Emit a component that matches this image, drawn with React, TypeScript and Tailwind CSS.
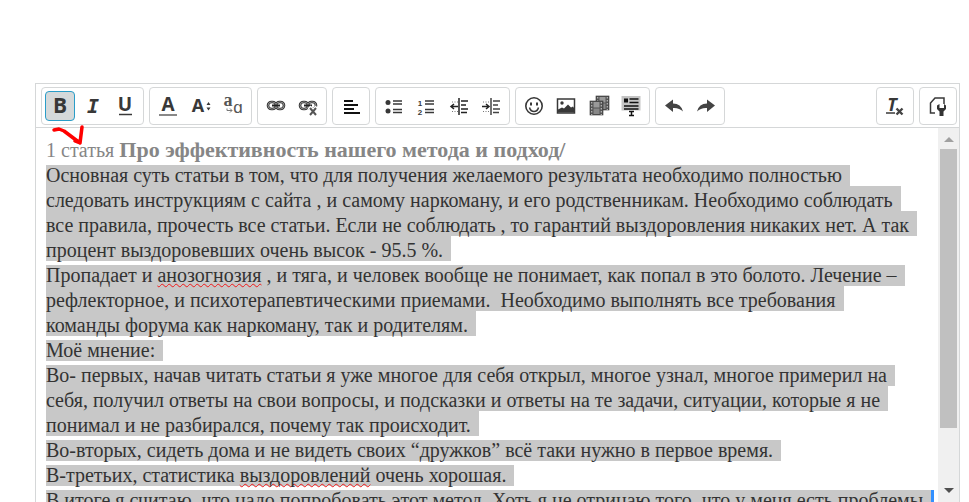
import type { ReactNode } from 'react';

const ink = '#383838';

function Group({ width, children }: { width: string; children: ReactNode }) {
  return (
    <div className={`flex h-[38px] shrink-0 items-center justify-between rounded border border-[#d5d7d8] px-[3px] ${width}`}>
      {children}
    </div>
  );
}

function Tool({ label, active = false, children }: { label: string; active?: boolean; children: ReactNode }) {
  return (
    <button
      type="button"
      aria-label={label}
      aria-pressed={active}
      className={`flex h-[30px] w-[30px] shrink-0 items-center justify-center rounded border ${
        active ? 'border-[#2a9dc8] bg-[#d5d9da]' : 'border-transparent'
      }`}
    >
      <svg width="30" height="30" viewBox="-3 -3 30 30" className="shrink-0" fill="none" stroke={ink} strokeWidth="2" aria-hidden="true">
        {children}
      </svg>
    </button>
  );
}

function Glyph({ x, y, size, family = 'Open Sans', weight = 700, italic = false, fill = ink, children }: {
  x: number; y: number; size: number; family?: string; weight?: number; italic?: boolean; fill?: string; children: string;
}) {
  return (
    <text x={x} y={y} fontSize={size} fontFamily={`"${family}", sans-serif`} fontWeight={weight}
      fontStyle={italic ? 'italic' : 'normal'} textAnchor="middle" fill={fill} stroke="none">
      {children}
    </text>
  );
}

function Chain() {
  return (
    <>
      <rect x="4" y="8" width="8" height="7" rx="3.5" stroke="#333" strokeWidth="2.6" />
      <rect x="12" y="8" width="8" height="7" rx="3.5" stroke="#333" strokeWidth="2.6" />
      <rect x="4" y="8" width="8" height="7" rx="3.5" stroke="#aaa" strokeWidth=".8" />
      <rect x="12" y="8" width="8" height="7" rx="3.5" stroke="#aaa" strokeWidth=".8" />
      <path d="M8 11.5h8" stroke="#222" strokeWidth="2" />
    </>
  );
}

function Film({ x, y }: { x: number; y: number }) {
  return (
    <g transform={`translate(${x} ${y})`}>
      <rect width="13" height="14" fill="#555" stroke="#333" strokeWidth=".6" />
      <rect x="3.5" y="1" width="6" height="5.5" fill="#999" stroke="none" />
      <rect x="3.5" y="7.5" width="6" height="5.5" fill="#888" stroke="none" />
      <path d="M1.7 1v13M11.3 1v13" stroke="#bbb" strokeWidth="1.2" strokeDasharray="1.5 1.5" />
    </g>
  );
}

function Misspelt({ children }: { children: string }) {
  return (
    <span className="underline decoration-[#f01818] decoration-wavy decoration-1 underline-offset-1 [text-decoration-skip-ink:none]">
      {children}
    </span>
  );
}

const paragraphs: ReactNode[][] = [
  [
    'Основная суть статьи в том, что для получения желаемого результата необходимо полностью',
    'следовать инструкциям с сайта , и самому наркоману, и его родственникам. Необходимо соблюдать',
    'все правила, прочесть все статьи. Если не соблюдать , то гарантий выздоровления никаких нет. А так',
    'процент выздоровевших очень высок - 95.5 %.',
  ],
  [
    <>Пропадает и <Misspelt>анозогнозия</Misspelt> , и тяга, и человек вообще не понимает, как попал в это болото. Лечение –</>,
    'рефлекторное, и психотерапевтическими приемами.  Необходимо выполнять все требования',
    'команды форума как наркоману, так и родителям.',
  ],
  ['Моё мнение:'],
  [
    'Во- первых, начав читать статьи я уже многое для себя открыл, многое узнал, многое примерил на',
    'себя, получил ответы на свои вопросы, и подсказки и ответы на те задачи, ситуации, которые я не',
    'понимал и не разбирался, почему так происходит.',
  ],
  ['Во-вторых, сидеть дома и не видеть своих “дружков” всё таки нужно в первое время.'],
  [<>В-третьих, статистика <Misspelt>выздоровлений</Misspelt> очень хорошая.</>],
  ['В итоге я считаю, что надо попробовать этот метод. Хоть я не отрицаю того, что у меня есть проблемы'],
];

function Toolbar() {
  return (
    <div role="toolbar" aria-label="Форматирование" className="flex h-[44px] shrink-0 items-center gap-[5px] border-b border-[#d5d7d8] pr-[2px] pl-[5px]">
      <Group width="w-[103px]">
        <Tool label="Полужирный" active><Glyph x={12} y={19} size={21}>B</Glyph></Tool>
        <Tool label="Курсив"><Glyph x={12} y={19} size={20} family="DejaVu Sans Mono" italic>I</Glyph></Tool>
        <Tool label="Подчёркнутый"><Glyph x={12} y={17} size={19}>U</Glyph><path d="M6 20.5h13" strokeWidth="1.5" /></Tool>
      </Group>
      <Group width="w-[103px]">
        <Tool label="Цвет текста"><Glyph x={12} y={17} size={19}>A</Glyph><path d="M3 21h18" stroke="#888" /></Tool>
        <Tool label="Размер шрифта"><Glyph x={9} y={18} size={18}>A</Glyph><path d="m17.5 11 2-3 2 3zM17.5 13.5h4l-2 3z" fill={ink} stroke="none" /></Tool>
        <Tool label="Шрифт">
          <Glyph x={7} y={12} size={18} family="Liberation Serif" fill="#555">a</Glyph>
          <Glyph x={17} y={19} size={17} weight={400} fill="#555">ɑ</Glyph>
          <path d="M6 14.5v2h5M9 14.5l2 2-2 2" stroke="#777" strokeWidth="1" />
        </Tool>
      </Group>
      <Group width="w-[70px]">
        <Tool label="Ссылка"><Chain /></Tool>
        <Tool label="Убрать ссылку"><Chain /><path d="m13 13 8 8m0-8-8 8" stroke="#fff" strokeWidth="4" /><path d="m14 14 6 7m0-7-6 7" stroke="#555" /></Tool>
      </Group>
      <Group width="w-[38px]">
        <Tool label="Выравнивание"><path d="M5 7h9M5 11h14M5 15h10M5 19h16" stroke="#111" /></Tool>
      </Group>
      <Group width="w-[135px]">
        <Tool label="Маркированный список">
          <g fill={ink} stroke="none"><circle cx="6" cy="8.5" r="2.5" /><circle cx="6" cy="17" r="2.5" /></g>
          <path d="M11 7h9M11 10h9M11 15.5h9M11 18.5h9" strokeWidth="1.5" />
        </Tool>
        <Tool label="Нумерованный список">
          <Glyph x={6} y={12} size={8} family="Liberation Sans">1</Glyph><Glyph x={6} y={21} size={8} family="Liberation Sans">2</Glyph>
          <path d="M11 7h9M11 10h9M11 15.5h9M11 18.5h9" strokeWidth="1.5" />
        </Tool>
        <Tool label="Уменьшить отступ">
          <path d="M12 4v17M14 7h7M14 11h5M14 15h7M14 18.5h6" stroke="#222" strokeWidth="1.5" />
          <path d="M5 8h7M5 17.5h7" stroke="#777" strokeWidth="1" strokeDasharray="1 1.5" />
          <path d="M4 12.5h7M7 10l-3 2.500L7 15" stroke="#222" strokeWidth="1.5" />
        </Tool>
        <Tool label="Увеличить отступ">
          <path d="M12 4v17M14 7h7M14 11h5M14 15h7M14 18.5h6" stroke="#444" strokeWidth="1.5" />
          <path d="M4 8h8M4 17.5h8" stroke="#777" strokeWidth="1" strokeDasharray="1 1.5" />
          <path d="M3 12.5h7M7 10l3 2.500L7 15" stroke="#222" strokeWidth="1.5" />
        </Tool>
      </Group>
      <Group width="w-[135px]">
        <Tool label="Смайлы">
          <circle cx="12" cy="12" r="8.2" strokeWidth="1.6" />
          <path d="M7.500 13.5q1 4 4.500 4t4.500-4" strokeWidth="1.5" /><path d="M9 8.500v3M15 8.500v3" />
        </Tool>
        <Tool label="Изображение">
          <rect x="3.5" y="5" width="17" height="14" strokeWidth="1.5" />
          <path d="M4 18.500v-3l4-2 2 1 4-4 3 3 2-1 2 3v3z" fill={ink} stroke="none" /><circle cx="8" cy="9" r="1.7" fill={ink} stroke="none" />
        </Tool>
        <Tool label="Медиа"><Film x={9} y={2} /><Film x={3} y={7} /></Tool>
        <Tool label="Спойлер">
          <path d="M2.500 2h19v14.500h-19z" fill="#c4c4c4" stroke="none" />
          <path d="M10.500 5h9M10.500 8.500h9M5 12h14.500M5 15h14.500" stroke="#111" strokeWidth="1.400" /><path d="M5 4.500h4v4H5z" fill="#111" stroke="none" />
          <path d="M9 16.500h7v6H9z" fill="#fff" stroke="none" /><path d="M10 17.500h5M10 21.500h5M12.500 17v4.500" stroke="#111" strokeWidth="1.5" />
        </Tool>
      </Group>
      <Group width="w-[70px]">
        <Tool label="Отменить"><path d="m3 11.500 8-6v4q8 0 10 8-4-4-10-3.500v4z" fill="#444" stroke="none" /></Tool>
        <Tool label="Повторить"><path d="m21 11.500-8-6v4q-8 0-10 8 4-4 10-3.500v4z" fill="#444" stroke="none" /></Tool>
      </Group>
      <div className="ml-auto flex gap-[5px]">
        <Group width="w-[38px]">
          <Tool label="Очистить форматирование">
            <Glyph x={9} y={17} size={18} italic>T</Glyph><path d="M3 19h9" strokeWidth="1.5" />
            <path d="m13.500 14.500 6 6m0-6-6 6" stroke="#444" strokeWidth="2.4" />
          </Tool>
        </Group>
        <Group width="w-[38px]">
          <Tool label="Режим BB-кодов">
            <path d="M9 19H4.500V9L9 4h9v6" strokeWidth="1.5" />
            <path d="M11 11.500v3.500l2.500 2.500V22h4v-4.500L20 15v-3.500l-2-1.500v4h-4.500v-4z" fill="#333" stroke="none" />
          </Tool>
        </Group>
      </div>
    </div>
  );
}

function Scrollbar() {
  return (
    <div aria-hidden="true" className="flex w-[21px] shrink-0 flex-col items-center bg-[#f0f0f0]">
      <svg width="10" height="21" viewBox="0 0 10 21"><path d="M0 14h10L5 9z" fill="#a0a0a0" /></svg>
      <div className="w-[17px] grow bg-[#c0c0c0]" />
      <div className="h-[59px] shrink-0" />
      <svg width="10" height="15" viewBox="0 0 10 15" className="shrink-0"><path d="M0 1h10L5 6z" fill="#505050" /></svg>
    </div>
  );
}

export default function App() {
  return (
    <main className="flex h-screen overflow-hidden bg-white pt-[83px] pr-[9px] pl-[35px]">
      <div className="relative flex min-w-0 grow flex-col border-x border-t border-[#d5d7d8]">
        <Toolbar />
        <div className="flex min-h-0 grow">
          <div
            role="textbox"
            aria-multiline="true"
            aria-label="Текст сообщения"
            contentEditable
            suppressContentEditableWarning
            spellCheck={false}
            className="min-w-0 grow overflow-hidden whitespace-pre pt-2 pl-[10px] font-['Liberation_Serif',serif] text-[20px] text-[#333] outline-none"
          >
            <p className="h-[25px] leading-[28px] text-[#868686]">1 статья <b className="text-[22px]">Про эффективность нашего метода и подход/</b></p>
            {paragraphs.map((lines, p) => (
              <div key={p}>
                {lines.map((line, i) => (
                  <p key={i} className="flex h-[25px]">
                    <span className={`h-[25px] bg-[#c8c8c8] bg-clip-padding pr-2 ${i === 0 ? 'border-t-4 border-transparent leading-[20px]' : 'leading-[28px]'}`}>
                      <span className="relative">{line}</span>
                    </span>
                    {p === paragraphs.length - 1 && <span className="mt-1 w-[3px] bg-[#3390ff]" />}
                  </p>
                ))}
              </div>
            ))}
          </div>
          <Scrollbar />
        </div>
        <svg aria-hidden="true" className="pointer-events-none absolute top-[40px] left-[15px]" width="36" height="28" viewBox="0 0 36 28">
          <path d="m3 6 5-1 5 2 8 6 8 6 2-16M29 19l-5-2" fill="none" stroke="#f00" strokeWidth="3.5" strokeLinecap="round" strokeLinejoin="round" />
        </svg>
      </div>
    </main>
  );
}
